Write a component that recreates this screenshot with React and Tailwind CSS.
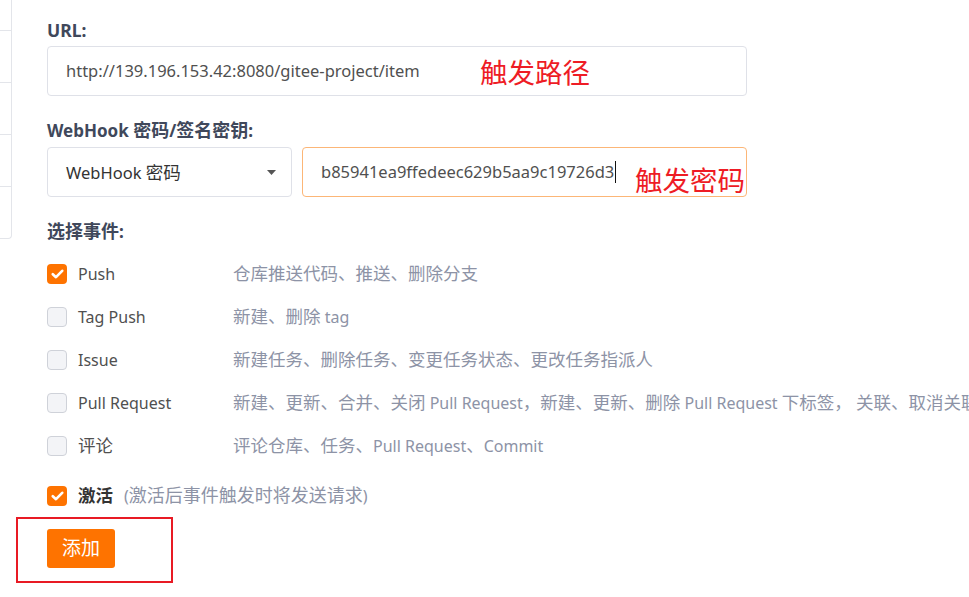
import React from "react";

const font = { fontFamily: '"Noto Sans", "Noto Sans CJK SC", sans-serif' };

const CJK = /([\u3000-\u303f\u4e00-\u9fff\uff00-\uffef]+)/;

function T({ text, cjk }) {
  const parts = text.split(CJK);
  return (
    <>
      {parts.map((p, i) =>
        i % 2 === 1 ? (
          <span key={i} className={cjk}>{p}</span>
        ) : (
          <React.Fragment key={i}>{p}</React.Fragment>
        )
      )}
    </>
  );
}

function Box({ checked }) {
  if (checked) {
    return (
      <span className="flex h-[20px] w-[20px] shrink-0 items-center justify-center rounded-[4px] bg-[#fe7300]">
        <svg width="13" height="10" viewBox="0 0 13 10" fill="none">
          <path d="M1.8 5.2 L5 8.2 L11.2 1.8" stroke="#fff" strokeWidth="2.6" strokeLinecap="round" strokeLinejoin="round" />
        </svg>
      </span>
    );
  }
  return <span className="h-[20px] w-[20px] shrink-0 rounded-[4px] border border-[#cfd2d9] bg-[#f3f4f7]" />;
}

const events = [
  ["Push", "仓库推送代码、推送、删除分支", true],
  ["Tag Push", "新建、删除 tag", false],
  ["Issue", "新建任务、删除任务、变更任务状态、更改任务指派人", false],
  ["Pull Request", "新建、更新、合并、关闭 Pull Request，新建、更新、删除 Pull Request 下标签， 关联、取消关联任务", false],
  ["评论", "评论仓库、任务、Pull Request、Commit", false],
];

export default function App() {
  return (
    <div className="relative flex h-[597px] w-[969px] overflow-hidden bg-white" style={font}>
      <div className="flex h-[239px] w-[12px] shrink-0 flex-col rounded-br-[4px] border-b border-r border-[#e3e5ea]">
        <div className="h-[31px] border-b border-[#e3e5ea]" />
        <div className="h-[52px] border-b border-[#e3e5ea]" />
        <div className="h-[52px] border-b border-[#e3e5ea]" />
        <div className="h-[52px] border-b border-[#e3e5ea]" />
      </div>
      <div className="flex flex-1 flex-col pl-[35px] pt-[19px]">
        <div className="h-[22px] text-[17.5px] font-bold leading-[22px] text-[#40485b]">URL:</div>
        <div className="relative mt-[5px] flex h-[50px] w-[700px] items-center rounded-[4px] border border-[#dfe1e8] pl-[18px] text-[16.5px] text-[#505050]">
          http://139.196.153.42:8080/gitee-project/item
          <span className="absolute left-[432px] top-[8px] text-[27.5px] leading-[36px] text-[#ee1c25]">触发路径</span>
        </div>
        <div className="mt-[23px] h-[22px] whitespace-nowrap text-[17px] font-bold leading-[22px] text-[#40485b]">
          <T text="WebHook 密码/签名密钥:" cjk="text-[18px]" />
        </div>
        <div className="mt-[6px] flex h-[50px] gap-[10px]">
          <div className="flex w-[245px] items-center justify-between rounded-[4px] border border-[#dfe1e8] pl-[18px] pr-[15px] text-[16.5px] text-[#333]">
            <span><T text="WebHook 密码" cjk="text-[17.5px]" /></span>
            <svg width="9" height="5" viewBox="0 0 9 5"><path d="M0 0 H9 L4.5 5 Z" fill="#555" /></svg>
          </div>
          <div className="relative flex w-[445px] items-center rounded-[4px] border border-[#fcb677] pl-[18px] text-[16.5px] text-[#505050]">
            <span>b85941ea9ffedeec629b5aa9c19726d3</span>
            <span className="ml-[1px] h-[22px] w-[1px] bg-[#111]" />
            <span className="absolute left-[332px] top-[15px] text-[27.5px] leading-[36px] text-[#ee1c25]">触发密码</span>
          </div>
        </div>
        <div className="mt-[23px] h-[22px] text-[17px] font-bold leading-[22px] text-[#40485b]">
          <T text="选择事件:" cjk="text-[18px]" />
        </div>
        <div className="mt-[10px] flex flex-col">
          {events.map(([name, desc, checked]) => (
            <div key={name} className="flex h-[43px] items-center whitespace-nowrap">
              <Box checked={checked} />
              <span className="ml-[11px] w-[155px] text-[16px] text-[#505050]">
                <T text={name} cjk="text-[17.5px]" />
              </span>
              <span className="text-[16px] text-[#8d93a6]">
                <T text={desc} cjk="text-[17.5px]" />
              </span>
            </div>
          ))}
        </div>
        <div className="mt-[7px] flex h-[43px] items-center whitespace-nowrap">
          <Box checked />
          <span className="ml-[11px] text-[17.5px] font-bold text-[#333]">激活</span>
          <span className="ml-[11px] text-[16px] text-[#8d93a6]">
            (<span className="text-[18px]">激活后事件触发时将发送请求</span>)
          </span>
        </div>
        <div className="mt-[12px] flex">
          <button className="flex h-[39px] w-[68px] items-center justify-center rounded-[3px] bg-[#fe7300] text-[19px] text-white">添加</button>
        </div>
      </div>
      <div className="pointer-events-none absolute left-[16px] top-[517px] h-[66px] w-[157px] border-2 border-[#e81a24]" />
    </div>
  );
}
